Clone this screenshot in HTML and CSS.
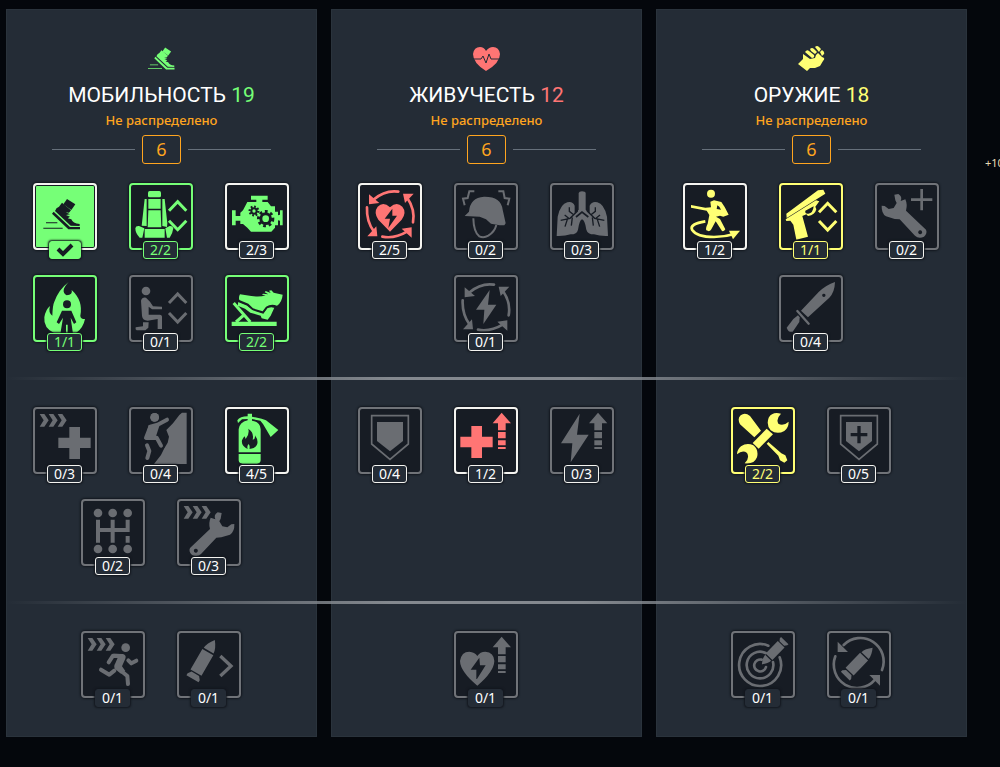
FILE: index.html
```html
<!DOCTYPE html>
<html lang="ru">
<head>
<meta charset="utf-8">
<title>Навыки экипажа</title>
<meta name="viewport" content="width=device-width, initial-scale=1">
<link rel="stylesheet" href="styles.css">
</head>
<body>
<svg class="defs" aria-hidden="true">
  <defs>
    <g id="boot">
      <path d="M141 72L166 88L154 105L130 88Z"/>
      <path d="M126 83L153 106L147 113L137 112L150 118L138 120L150 125L143 130L154 133Q158 145 179 147V153L152 152L105 108Q108 98 117 95Z"/>
      <path d="M101 110L150 156H180V163H145L96 116Z"/>
      <path d="M78 142H112V145H78ZM70 158H128V161H70Z"/>
    </g>
    <g id="updown" fill="none" stroke="currentColor" stroke-width="9">
      <path d="M120 83L146 56L172 83M120 113L146 140L172 113"/>
    </g>
    <path id="speed" d="M20 21H34L47 40L34 59H20L32 40ZM47 21H61L74 40L61 59H47L59 40ZM74 21H88L101 40L88 59H74L86 40Z"/>
    <path id="rise" d="M143 17L171 49H155V70H132V49H116ZM132 75H155V94H132ZM132 100H155V115H132ZM132 120H155V126H132Z"/>
    <g id="cycle">
      <path fill="none" stroke="currentColor" stroke-width="8" stroke-linecap="round" d="M121 26Q82 20 46 50M27 73Q25 115 48 146M73 161Q110 168 147 146M165 118Q172 80 148 45"/>
      <path d="M33 34V64L64 60ZM58 160H28L55 130ZM161 133V164L131 137ZM135 32H167L141 60Z"/>
    </g>
    <g id="round">
      <path d="M0 -75Q16 -55 17 -38H-17Q-16 -55 0 -75ZM-19 -33H19V38H-19ZM-13 42H13L21 52V59H-21V52Z"/>
    </g>
    <path id="shield" fill="none" stroke="currentColor" stroke-width="5" d="M41 26H151V111L96 157L41 111Z"/>
    <path id="wrench" d="M586 88Q580 75 593 67L605 69L602 86L598 94L607 109L622 112L634 103L643 102Q644 125 630 134L604 142L589 143L543 192Q532 202 516 195Q505 185 510 174L570 117Q565 98 572 83ZM527 176a6 6 0 1 0 1 0Z" fill-rule="evenodd"/>
  </defs>
</svg>

<div class="screen">
<main class="board">

  <section class="panel green" aria-labelledby="t1">
    <header class="head">
      <svg class="emblem" viewBox="70 70 112 95" aria-hidden="true"><use href="#boot"/></svg>
      <h2 class="title" id="t1">МОБИЛЬНОСТЬ <span class="total">19</span></h2>
      <p class="note">Не распределено</p>
      <div class="points"><span class="count">6</span></div>
    </header>
    <div class="tier">
      <button class="perk full picked" aria-label="Быстрый бег"><span class="frame"><svg viewBox="45 30 180 189"><use href="#boot"/></svg></span><span class="badge tick"><svg viewBox="0 0 20 14"><path fill="none" stroke="currentColor" stroke-width="4" d="M3 6L8 11L17 2"/></svg></span></button>
      <button class="perk full"><span class="frame"><svg viewBox="333 30 180 189">
        <rect x="384" y="48" width="39" height="19" rx="5"/>
        <path d="M385 72H422V101H385ZM385 106H422L424 157H383ZM374 72H380L380 153L365 152ZM427 72H434L442 145L441 156L427 153ZM374 162H434V188H374ZM346 160Q347 152 357 153L373 160L367 188H359Q346 175 346 160ZM460 160Q458 152 449 153L436 160L441 188H449Q458 176 460 160Z"/>
        <use href="#updown" x="327" y="24"/></svg></span><span class="badge">2/2</span></button>
      <button class="perk open"><span class="frame"><svg viewBox="622 30 180 189">
        <path d="M694 62H744V74H728V81H744L754 94H766V110H775V121L781 119V106H789V151H781V137L775 136V151H766V158L755 170H694L683 158L670 147H662V137H648V151H637V106H648V123H662V113L670 106L683 81H710V74H694Z"/>
        <g class="hole"><circle cx="703" cy="108" r="11"/><circle cx="703" cy="108" r="13" fill="none" stroke-width="7" stroke-dasharray="5 5"/><circle cx="738" cy="131" r="19"/><circle cx="738" cy="131" r="21" fill="none" stroke-width="10" stroke-dasharray="8 8"/></g>
        <circle cx="703" cy="108" r="5"/><circle cx="738" cy="131" r="10"/></svg></span><span class="badge">2/3</span></button>
      <button class="perk full"><span class="frame"><svg viewBox="45 27 180 189">
        <path d="M146 42Q119 70 140 82Q159 80 155 66Q190 98 181 143Q181 153 195 153Q190 180 168 195H102Q70 180 73 148Q77 124 90 114Q84 134 97 143Q98 111 103 101Q116 65 146 42Z"/>
        <g class="hole"><circle cx="141" cy="109" r="12"/><path d="M126 128H154L169 163L162 168L152 149L159 198H143V170H138V198H121L129 149L117 168L110 163Z"/></g></svg></span><span class="badge">1/1</span></button>
      <button class="perk locked"><span class="frame"><svg viewBox="333 27 180 189">
        <circle cx="378" cy="69" r="13"/>
        <path d="M363 98Q366 87 378 89L390 101L399 115L426 116V124H396L386 116V140H419Q427 141 426 148V183H413V153L383 158Q368 158 366 144ZM369 163H386L385 179L376 187H350Q345 185 347 178L369 175Z"/>
        <use href="#updown" x="327" y="22"/></svg></span><span class="badge">0/1</span></button>
      <button class="perk full"><span class="frame"><svg viewBox="622 27 180 189">
        <path d="M656 100L682 112L700 126L731 136L742 121Q752 115 764 119L753 143L744 155L726 151L723 143L692 134L676 122L654 113Z"/>
        <path class="hole" fill="none" stroke-width="5" d="M654 99L684 111L699 124L730 134L741 119Q753 111 770 117"/>
        <path d="M661 79L695 84Q721 88 738 82L727 80L730 77L746 79L735 73L738 69L753 75L748 68L755 67L762 74L789 80Q787 103 772 113Q754 107 739 116L729 130L700 121L686 107L659 96Q656 88 661 79Z"/>
        <path d="M636 161H771V174H636Z"/>
        <path fill="none" stroke="currentColor" stroke-width="9" d="M642 105L692 162M649 162L674 140"/></svg></span><span class="badge">2/2</span></button>
    </div>
    <div class="tier">
      <button class="perk locked"><span class="frame"><svg viewBox="45 27 180 189">
        <use href="#speed" x="39" y="21"/><path d="M148 81H180V113H212V144H180V177H148V144H115V113H148Z"/></svg></span><span class="badge">0/3</span></button>
      <button class="perk locked"><span class="frame"><svg viewBox="333 27 180 189">
        <path d="M500 38V192H402L423 165L433 145L443 128L447 110L439 90L459 70L478 45L486 38Z"/>
        <circle cx="404" cy="52" r="13"/>
        <path class="limbs gap" d="M441 59L413 74L391 80L378 114L410 113L423 137M381 132L388 153L382 174"/>
        <circle cx="404" cy="52" r="13"/>
        <path class="limbs" d="M441 59L413 74L391 80L378 114L410 113L423 137M381 136L388 153L382 174"/>
        <path d="M386 75L418 78L408 109L376 118Z"/></svg></span><span class="badge">0/4</span></button>
      <button class="perk open"><span class="frame"><svg viewBox="622 27 180 189">
        <path d="M684 41H697V50L726 56L739 61L776 90L753 111L730 72L722 62L697 57V62Q722 66 723 88V157H657V88Q659 67 684 61V57L667 58L655 69L653 61Q661 49 684 49ZM657 162H723V181Q722 191 712 191H669Q658 191 657 181Z"/>
        <path class="hole" d="M686 86Q704 98 699 119Q708 117 706 106Q718 123 711 136Q704 148 689 146Q692 139 687 132Q681 138 684 147Q664 138 667 121Q671 112 675 109L678 117Q690 104 686 86Z"/></svg></span><span class="badge">4/5</span></button>
      <button class="perk locked"><span class="frame"><svg viewBox="189 33 180 189">
        <circle cx="234" cy="69" r="13"/><circle cx="278" cy="69" r="13"/><circle cx="323" cy="69" r="13"/><circle cx="234" cy="177" r="13"/><circle cx="278" cy="177" r="13"/><circle cx="323" cy="177" r="13"/>
        <path d="M228 89H240V114H272V89H284V114H317V89H329V126H284V158H272V126H240V158H228ZM317 138H329V158H317Z"/></svg></span><span class="badge">0/2</span></button>
      <button class="perk locked"><span class="frame"><svg viewBox="477 33 180 189"><use href="#speed" x="471" y="27"/><use href="#wrench"/></svg></span><span class="badge">0/3</span></button>
    </div>
    <div class="tier last">
      <button class="perk locked"><span class="frame"><svg viewBox="189 39 180 189">
        <use href="#speed" x="183" y="33"/><circle cx="317" cy="83" r="13"/>
        <path class="limbs" d="M266 127L279 107L300 108M325 121L334 130L349 122M243 149L268 164L283 152M300 150L322 168L324 192"/>
        <path d="M280 101L309 102Q320 105 316 116L306 139L316 153L303 161L285 147Q280 140 286 130L293 113Z"/></svg></span><span class="badge">0/1</span></button>
      <button class="perk locked"><span class="frame"><svg viewBox="477 39 180 189">
        <use href="#round" transform="translate(547 125) rotate(30)"/><path fill="none" stroke="currentColor" stroke-width="10" d="M601 108L633 138L601 168"/></svg></span><span class="badge">0/1</span></button>
    </div>
  </section>

  <section class="panel red" aria-labelledby="t2">
    <header class="head">
      <svg class="emblem" viewBox="0 0 27 25" aria-hidden="true">
        <path d="M13 25Q0 17 0 8Q1 1 7 1Q11 1 13 5Q16 1 20 1Q26 1 27 8Q27 17 13 25Z"/>
        <path class="pulse" d="M0 13H8L10 10L13 17L16 8L18 13H27"/></svg>
      <h2 class="title" id="t2">ЖИВУЧЕСТЬ <span class="total">12</span></h2>
      <p class="note">Не распределено</p>
      <div class="points"><span class="count">6</span></div>
    </header>
    <div class="tier">
      <button class="perk open"><span class="frame"><svg viewBox="6 6 180 189"><use href="#cycle"/>
        <path d="M96 146L61 110Q46 88 59 71Q76 54 96 73Q116 54 133 71Q147 88 131 110Z"/><path class="hole" d="M103 77L80 107H96L91 135L117 98H103Z"/></svg></span><span class="badge">2/5</span></button>
      <button class="perk locked"><span class="frame"><svg viewBox="333 30 180 189">
        <path d="M359 123L372 110Q375 68 417 65Q468 64 473 104L482 145L478 151H464L438 146L423 133L404 125Z"/>
        <path fill="none" stroke="currentColor" stroke-width="6" d="M385 130Q386 172 403 184Q416 190 430 182Q449 170 454 150M388 49L373 49L368 69L354 71L359 91M460 49L475 49L479 69L493 71L488 91"/></svg></span><span class="badge">0/2</span></button>
      <button class="perk locked"><span class="frame"><svg viewBox="622 30 180 189">
        <path d="M702 54Q703 49 712 49Q722 49 723 54V104L735 116V92Q742 78 758 82Q778 86 787 125L790 183Q766 184 748 178Q729 178 725 164Q721 136 712 133Q704 136 700 164Q697 178 678 178Q660 184 636 183L639 125Q648 86 668 82Q684 78 690 92V116L702 104Z"/>
        <path class="hole" fill="none" stroke-width="4" d="M698 88V109L676 130L648 136M728 88V109L750 130L779 136M687 119L674 109V97M739 119L752 109V97M674 131L660 120M668 133L661 155M683 127L680 152M752 131L766 120M758 133L765 155M743 127L746 152"/>
        <path class="hole" fill="none" stroke-width="5" d="M694 126L712 111L731 126"/></svg></span><span class="badge">0/3</span></button>
      <button class="perk locked"><span class="frame"><svg viewBox="336 27 180 189"><use href="#cycle" x="329" y="24"/><path d="M437 66L396 125H421L418 168L457 110H432Z"/></svg></span><span class="badge">0/1</span></button>
    </div>
    <div class="tier">
      <button class="perk locked"><span class="frame"><svg viewBox="6 6 180 189"><use href="#shield"/><path d="M57 45H135V102L96 133L57 102Z"/></svg></span><span class="badge">0/4</span></button>
      <button class="perk open"><span class="frame"><svg viewBox="6 6 180 189"><use href="#rise"/><path d="M52 57H84V89H116V121H84V153H52V121H19V89H52Z"/></svg></span><span class="badge">1/2</span></button>
      <button class="perk locked"><span class="frame"><svg viewBox="622 27 180 189"><use href="#rise" x="617" y="21"/><path d="M705 41L649 130H683L678 187L732 104H697Z"/></svg></span><span class="badge">0/3</span></button>
    </div>
    <div class="tier last">
      <button class="perk locked"><span class="frame"><svg viewBox="6 6 180 189"><use href="#rise"/>
        <path d="M70 164Q19 122 18 90Q22 62 46 62Q62 63 70 75Q78 62 94 62Q120 64 121 90Q120 122 70 164Z"/><path class="hole" d="M76 80L50 116H67V144H69L95 103H78Z"/></svg></span><span class="badge">0/1</span></button>
    </div>
  </section>

  <section class="panel yellow" aria-labelledby="t3">
    <header class="head">
      <svg class="emblem" viewBox="0 0 27 25" aria-hidden="true"><path d="M12 3Q14 1 16 3L18 5L19 6L17 8L13 5ZM17 1Q19 -1 21 1L23 3L21 6ZM7 6Q9 3 11 5L16 9Q17 12 14 12ZM22 6L24 4Q27 6 26 8L24 10ZM20 7L24 11Q28 12 25 15L22 20L17 22L12 22L9 25L0 18L5 13V8L12 13L17 12L18 9Z"/></svg>
      <h2 class="title" id="t3">ОРУЖИЕ <span class="total">18</span></h2>
      <p class="note">Не распределено</p>
      <div class="points"><span class="count">6</span></div>
    </header>
    <div class="tier">
      <button class="perk open"><span class="frame"><svg viewBox="43 30 180 189">
        <circle cx="121" cy="56" r="12"/>
        <path fill-rule="evenodd" d="M119 80L130 76L152 81L162 96L174 119L158 125L148 122L136 125L148 132L164 163Q161 170 154 168L135 139L122 163Q118 172 107 166Q104 160 111 146L116 120L108 107L61 98V90L104 98L121 97ZM140 91L138 102L151 104L146 95Z"/>
        <path fill="none" stroke="currentColor" stroke-width="8" d="M104 139Q56 147 64 164Q78 186 130 186Q165 185 194 176"/>
        <path d="M175 167H208L187 193Z"/></svg></span><span class="badge">1/2</span></button>
      <button class="perk full"><span class="frame"><svg viewBox="331 30 180 189">
        <path d="M347 116L442 46L458 44L464 56L348 129ZM345 133L436 76L446 79L434 95L437 103Q433 120 412 123L407 118L395 123L412 185L377 194L368 149L359 137L347 138ZM404 107Q402 117 413 116Q427 115 429 94Z" fill-rule="evenodd"/>
        <path fill="none" stroke="currentColor" stroke-width="9" d="M445 112L471 85L497 112M445 138L471 165L497 138"/></svg></span><span class="badge">1/1</span></button>
      <button class="perk locked"><span class="frame"><svg viewBox="621 30 180 189">
        <use href="#wrench" transform="matrix(-1 0 0 1 1278 -10)"/><path d="M751 42H759V70H787V78H759V106H751V78H723V70H751Z"/></svg></span><span class="badge">0/2</span></button>
      <button class="perk locked"><span class="frame"><svg viewBox="334 306 180 189">
        <path fill-rule="evenodd" d="M496 321Q495 352 479 368L415 427L394 407L447 351Q469 330 496 321ZM462 356a5 5 0 1 0 1 0Z"/>
        <path d="M385 421L390 427L389 441L369 470Q356 473 351 458L371 432Z"/>
        <path fill="none" stroke="currentColor" stroke-width="7" stroke-linecap="round" d="M383 408L417 446"/></svg></span><span class="badge">0/4</span></button>
    </div>
    <div class="tier">
      <button class="perk full"><span class="frame"><svg viewBox="187 27 180 189">
        <path d="M208 73Q199 55 210 46Q223 36 238 48L271 92L251 112ZM288 131L293 126L332 160L344 166L350 181L341 188L328 181L323 167Z"/>
        <path d="M288 86L307 103L264 146L246 129Z"/>
        <path d="M331 41Q305 34 294 53Q286 75 300 91Q319 105 341 93Q354 83 354 65Q337 80 323 71Q315 57 331 41ZM222 190Q250 194 259 172Q265 150 248 136Q229 126 211 139Q199 149 199 163Q216 149 229 159Q238 174 222 190Z"/></svg></span><span class="badge">2/2</span></button>
      <button class="perk locked"><span class="frame"><svg viewBox="6 6 180 189"><use href="#shield"/><path d="M57 45H135V102L96 133L57 102Z"/><path class="hole" d="M91 57H101V78H121V88H101V109H91V88H71V78H91Z"/></svg></span><span class="badge">0/5</span></button>
    </div>
    <div class="tier last">
      <button class="perk locked"><span class="frame"><svg viewBox="6 6 180 189">
        <g fill="none" stroke="currentColor" stroke-width="8" stroke-linecap="round"><path d="M112 44A63 63 0 1 0 146 79"/><path d="M104 66A40 40 0 1 0 126 93"/><path d="M92 86A18 18 0 1 0 105 108"/></g>
        <use href="#round" transform="translate(131 60) rotate(224) scale(.74)"/></svg></span><span class="badge">0/1</span></button>
      <button class="perk locked"><span class="frame"><svg viewBox="6 6 180 189">
        <path fill="none" stroke="currentColor" stroke-width="8" stroke-linecap="round" d="M50 42A70 70 0 0 1 165 117M25 76A70 70 0 0 0 144 146"/>
        <path d="M32 32V63H63ZM159 132H127L159 164Z"/>
        <use href="#round" transform="translate(91 98) rotate(44) scale(.88)"/></svg></span><span class="badge">0/1</span></button>
    </div>
  </section>

  <hr class="divider first">
  <hr class="divider second">
</main>
<aside class="side">+10</aside>
</div>
</body>
</html>
```

FILE: styles.css
```css
* { box-sizing: border-box; }

body {
  margin: 0;
  min-height: 100vh;
  background: #04070c;
  color: #fff;
  font-family: "Noto Sans", "Open Sans", sans-serif;
}

.defs { position: absolute; width: 0; height: 0; }

.screen {
  display: flex;
  padding: 9px 0 30px 6px;
}

.board {
  flex: 1;
  min-width: 0;
  display: grid;
  grid-template-columns: repeat(3, minmax(0, 1fr));
  grid-template-rows: auto auto 3px auto 3px auto;
  column-gap: 14px;
}

.side {
  width: 33px;
  padding: 144px 0 0 18px;
  overflow: hidden;
  white-space: nowrap;
  font-size: 11px;
  line-height: 20px;
  color: #e6dcb4;
}

.panel {
  grid-row: 1 / -1;
  display: grid;
  grid-template-rows: subgrid;
  background: #242c36;
  box-shadow: inset 0 0 0 1px #2a333c;
}

.panel:nth-child(1) { grid-column: 1; }
.panel:nth-child(2) { grid-column: 2; }
.panel:nth-child(3) { grid-column: 3; }

.green { --accent: #76ff77; }
.red { --accent: #ff7574; }
.yellow { --accent: #ffff74; }

.head {
  grid-row: 1;
  display: flex;
  flex-direction: column;
  align-items: center;
  padding: 37px 46px 19px;
}

.emblem {
  width: 27px;
  height: 25px;
  fill: var(--accent);
}

.pulse {
  fill: none;
  stroke: #242c36;
  stroke-width: 1;
}

.title {
  margin: 10px 0 1px;
  font-family: Roboto, "Noto Sans", sans-serif;
  font-size: 21px;
  font-weight: 400;
  line-height: 28px;
  white-space: nowrap;
}

.total { color: var(--accent); }

.note {
  margin: 0 0 5px;
  font-size: 13px;
  font-weight: 500;
  line-height: 20px;
  color: #ffa51f;
}

.points {
  align-self: stretch;
  display: flex;
  align-items: center;
  gap: 7px;
}

.points::before,
.points::after {
  content: "";
  flex: 1;
  height: 1px;
  background: #66707b;
}

.count {
  width: 39px;
  border: 1px solid #ffa51f;
  border-radius: 3px;
  font-size: 18px;
  line-height: 27px;
  text-align: center;
  color: #ffa51f;
}

.tier {
  display: flex;
  flex-wrap: wrap;
  justify-content: center;
  align-content: flex-start;
  gap: 16px 32px;
  padding: 27px 18px 26px 16px;
}

.head + .tier { grid-row: 2; padding-top: 0; }
.head + .tier + .tier { grid-row: 4; }
.tier.last { grid-row: 6; padding-bottom: 30px; }

.divider {
  grid-column: 1 / -1;
  width: 100%;
  height: 3px;
  margin: 0;
  border: 0;
  background: linear-gradient(90deg, transparent, #84898f 40%, #84898f 60%, transparent);
}

.divider.first { grid-row: 3; }
.divider.second { grid-row: 5; }

.perk {
  --ink: var(--accent);
  --edge: #f4f4f0;
  --fill: #171c24;
  display: flex;
  flex-direction: column;
  align-items: center;
  width: 64px;
  padding: 0;
  border: 0;
  background: none;
  color: inherit;
  font: inherit;
  cursor: pointer;
}

.full { --edge: var(--accent); }
.locked { --ink: #6a6d72; --edge: #707378; }
.picked { --edge: #f4f4f0; --ink: #171c24; --fill: var(--accent); }

.frame {
  width: 64px;
  height: 67px;
  border: 2px solid var(--edge);
  border-radius: 4px;
  background: var(--fill);
  box-shadow: 0 0 2px 1px #12171e;
  color: var(--ink);
}

.picked .frame { box-shadow: 0 0 2px 1px #12171e, inset 0 0 0 1px #171c24; }

.frame svg {
  display: block;
  width: 60px;
  height: 63px;
  fill: currentColor;
}

.hole { fill: var(--fill); stroke: var(--fill); }
.hole[fill="none"],
.hole [fill="none"] { fill: none; }
.hole:not([stroke-width]) { stroke-width: 0; }

.limbs {
  fill: none;
  stroke: currentColor;
  stroke-width: 12;
  stroke-linecap: round;
  stroke-linejoin: round;
}

.limbs.gap { stroke: var(--fill); stroke-width: 22; }

.badge {
  min-width: 35px;
  height: 18px;
  margin-top: -9px;
  border: 1px solid #f4f4f0;
  border-radius: 3px;
  background: #242c36;
  box-shadow: 0 0 2px 1px #12171e;
  font-size: 14px;
  line-height: 16px;
  text-align: center;
}

.full .badge { border-color: var(--accent); color: var(--accent); }
.last .badge { border-color: #242c36; }

.full .tick {
  display: grid;
  place-items: center;
  min-width: 32px;
  background: var(--accent);
  color: #171c24;
}

.tick svg { width: 20px; height: 14px; }
```
